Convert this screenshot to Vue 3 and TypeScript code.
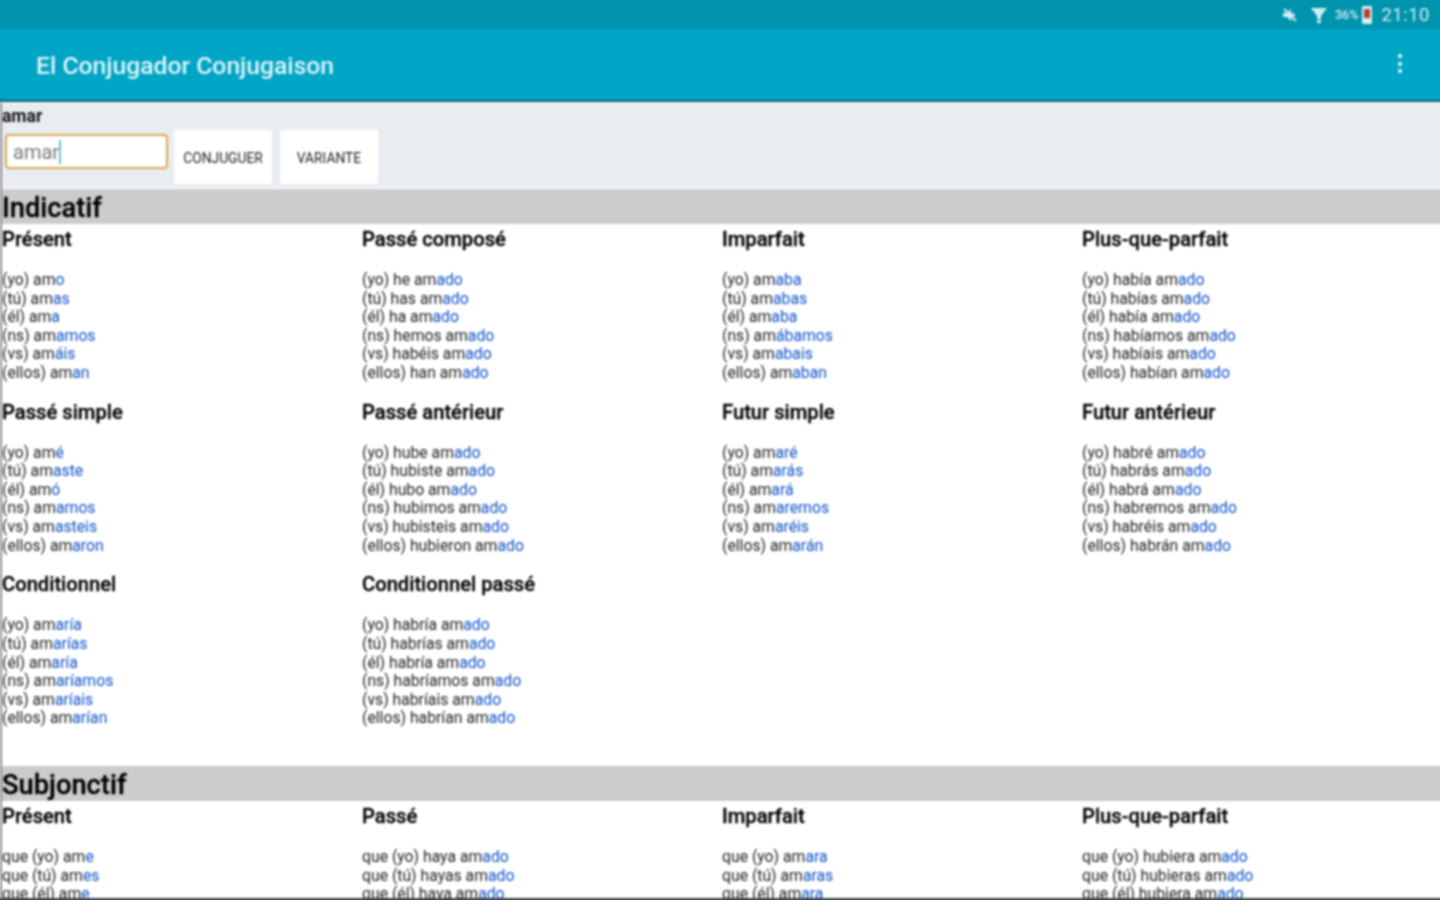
<script setup lang="ts">
interface Tense {
  title: string;
  forms: string[][];
}
interface Mood {
  name: string;
  tenses: Tense[];
}

const persons = ["(yo)", "(tú)", "(él)", "(ns)", "(vs)", "(ellos)"];
const subjPersons = persons.map((p) => "que " + p);

// simple tense: stem in black, ending in blue
function simple(prefix: string[], endings: string[]): string[][] {
  return endings.map((e, i) => [prefix[i] + " am", e]);
}
function compound(prefix: string[], aux: string[]): string[][] {
  return aux.map((a, i) => [prefix[i] + " " + a + " am", "ado"]);
}

const moods: Mood[] = [
  {
    name: "Indicatif",
    tenses: [
      { title: "Présent", forms: simple(persons, ["o", "as", "a", "amos", "áis", "an"]) },
      { title: "Passé composé", forms: compound(persons, ["he", "has", "ha", "hemos", "habéis", "han"]) },
      { title: "Imparfait", forms: simple(persons, ["aba", "abas", "aba", "ábamos", "abais", "aban"]) },
      { title: "Plus-que-parfait", forms: compound(persons, ["había", "habías", "había", "habíamos", "habíais", "habían"]) },
      { title: "Passé simple", forms: simple(persons, ["é", "aste", "ó", "amos", "asteis", "aron"]) },
      { title: "Passé antérieur", forms: compound(persons, ["hube", "hubiste", "hubo", "hubimos", "hubisteis", "hubieron"]) },
      { title: "Futur simple", forms: simple(persons, ["aré", "arás", "ará", "aremos", "aréis", "arán"]) },
      { title: "Futur antérieur", forms: compound(persons, ["habré", "habrás", "habrá", "habremos", "habréis", "habrán"]) },
      { title: "Conditionnel", forms: simple(persons, ["aría", "arías", "aría", "aríamos", "aríais", "arían"]) },
      { title: "Conditionnel passé", forms: compound(persons, ["habría", "habrías", "habría", "habríamos", "habríais", "habrían"]) },
    ],
  },
  {
    name: "Subjonctif",
    tenses: [
      { title: "Présent", forms: simple(subjPersons, ["e", "es", "e", "emos", "éis", "en"]) },
      { title: "Passé", forms: compound(subjPersons, ["haya", "hayas", "haya", "hayamos", "hayáis", "hayan"]) },
      { title: "Imparfait", forms: simple(subjPersons, ["ara", "aras", "ara", "áramos", "arais", "aran"]) },
      { title: "Plus-que-parfait", forms: compound(subjPersons, ["hubiera", "hubieras", "hubiera", "hubiéramos", "hubierais", "hubieran"]) },
    ],
  },
];
</script>

<template>
  <div class="screen">
    <div class="status-bar">
      <svg class="st-mute" viewBox="0 0 18 18" width="18" height="18">
        <path d="M2 7h4l4-4v4l4 1v2l-4 1v4l-4-4H2z" fill="#cfeef4" />
        <path d="M3 3l12 12" stroke="#cfeef4" stroke-width="2" />
      </svg>
      <svg class="st-wifi" viewBox="0 0 18 18" width="18" height="18">
        <path d="M1 2h16l-6 8v3H7v-3z" fill="#cfeef4" />
        <circle cx="9" cy="15.5" r="2" fill="#cfeef4" />
      </svg>
      <span class="st-pct">36%</span>
      <span class="st-batt"><i></i></span>
      <span class="st-time">21:10</span>
    </div>

    <header class="app-bar">
      <span class="app-title">El Conjugador Conjugaison</span>
      <span class="menu"><i></i><i></i><i></i></span>
    </header>

    <main class="content">
      <section class="form-panel">
        <div class="form-label">amar</div>
        <div class="form-row">
          <div class="input">amar<span class="caret"></span></div>
          <button class="btn">CONJUGUER</button>
          <button class="btn">VARIANTE</button>
        </div>
      </section>

      <section v-for="mood in moods" :key="mood.name" class="mood">
        <h1 class="mood-title">{{ mood.name }}</h1>
        <div class="tenses">
          <div v-for="tense in mood.tenses" :key="tense.title" class="tense">
            <h2 class="tense-title">{{ tense.title }}</h2>
            <div v-for="form in tense.forms" :key="form[0]" class="form-line">
              {{ form[0] }}<span class="ending">{{ form[1] }}</span>
            </div>
          </div>
        </div>
      </section>
    </main>
    <div class="bottom-edge"></div>
  </div>
</template>

<style scoped>
/* 4px bleed on every side so the blur doesn't fade out at the window edge */
.screen {
  width: 1448px;
  height: 908px;
  margin: -4px 0 0 -4px;
  overflow: hidden;
  position: relative;
  background: #fff;
  font-family: Roboto, "Liberation Sans", sans-serif;
  color: #222;
  filter: blur(0.9px);
}

.status-bar {
  height: 33px;
  background: #0093ad;
  display: flex;
  align-items: center;
  justify-content: flex-end;
  padding: 4px 14px 0 0;
  box-sizing: border-box;
  color: #d5eff4;
}
.st-mute {
  margin-right: 11px;
}
.st-wifi {
  margin-right: 7px;
}
.st-pct {
  font-size: 12.5px;
  font-weight: 500;
  margin-right: 4px;
}
.st-batt {
  width: 10px;
  height: 18px;
  background: #d5eff4;
  border-radius: 1px;
  margin-right: 9px;
  display: flex;
  justify-content: center;
  padding-top: 3px;
  box-sizing: border-box;
}
.st-batt i {
  width: 6px;
  height: 9px;
  background: #b5402e;
}
.st-time {
  font-size: 18.5px;
  letter-spacing: 0.5px;
}

.app-bar {
  height: 73px;
  background: #00a5c6;
  display: flex;
  align-items: center;
  justify-content: space-between;
  padding: 2px 42px 0 40px;
  border-bottom: 2px solid #04607a;
  box-sizing: border-box;
  margin-bottom: 1px;
}
.app-title {
  color: #dff4f8;
  font-size: 24.7px;
  font-weight: 500;
}
.menu {
  display: flex;
  flex-direction: column;
  gap: 3.5px;
  margin-bottom: 4px;
}
.menu i {
  width: 4px;
  height: 4px;
  border-radius: 50%;
  background: #f2fcfd;
}

.content {
  margin-left: 4px;
  border-left: 2px solid #8a8a8a;
}

.form-panel {
  background: #e9ecf1;
  height: 85px;
  padding-top: 3px;
  box-sizing: border-box;
}
.form-label {
  font-size: 17.5px;
  font-weight: 700;
  line-height: 21px;
  height: 24px;
  color: #111;
}
.form-row {
  display: flex;
  align-items: flex-start;
}
.input {
  width: 163px;
  height: 35px;
  margin: 4px 6px 0 3px;
  box-sizing: border-box;
  background: #fff;
  border: 2px solid #dba84a;
  border-radius: 4px;
  font-size: 20px;
  line-height: 31px;
  padding: 2px 0 0 6px;
  color: #777;
  display: flex;
  align-items: center;
}
.caret {
  width: 2px;
  height: 24px;
  margin-top: -2px;
  background: #67c1dc;
}
.btn {
  width: 98px;
  height: 54px;
  margin: 0 8px 0 0;
  padding: 2px 0 0;
  border: 0;
  background: #fff;
  font-family: inherit;
  font-size: 13.8px;
  color: #222;
}

.mood-title {
  margin: 1px 0 0;
  height: 35px;
  background: #ccc;
  font-size: 27.3px;
  line-height: 38px;
  font-weight: 500;
  color: #000;
  -webkit-text-stroke: 0.3px #000;
}
.mood {
  min-height: 576px;
}
.tenses {
  display: grid;
  grid-template-columns: repeat(4, 360px);
  margin-top: 4px;
}
.tense {
  height: 172.7px;
}
.tense-title {
  margin: 0 0 22px;
  height: 21px;
  font-size: 20.2px;
  line-height: 22px;
  font-weight: 500;
  color: #000;
  -webkit-text-stroke: 0.3px #000;
}
.form-line {
  font-size: 15.75px;
  line-height: 18.6px;
  height: 18.6px;
  color: #222;
  white-space: pre;
}
.ending {
  color: #0f52c8;
}

/* dark line at the very bottom of the shot, over the clipped rows */
.bottom-edge {
  position: absolute;
  left: 0;
  right: 0;
  top: 902px;
  height: 6px;
  background: #444;
}
</style>

<style>
html,
body {
  margin: 0;
  background: #fff;
  overflow: hidden;
}
</style>
